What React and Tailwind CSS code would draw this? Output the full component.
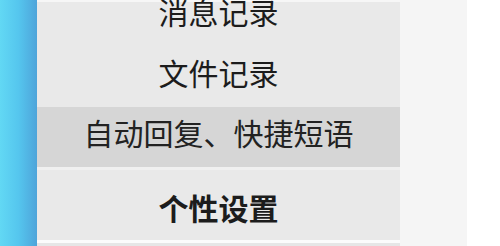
export default function App() {
  const font = { fontFamily: '"Noto Sans CJK SC", "Microsoft YaHei", sans-serif' }

  return (
    <div className="w-[500px] h-[246px] overflow-hidden flex bg-white" style={font}>
      <div className="w-[37px] h-full bg-gradient-to-r from-[#62d8f4] via-[#55c6ee] to-[#4ea4da]" />
      <div className="w-[363px] h-full flex flex-col bg-[#e9e9e9] border-t-2 border-[#f6f6f6] text-[30px] leading-none text-[#1c1c1c]">
        <div className="h-[61px] -mt-[17px] pb-[10px] shrink-0 flex items-center justify-center">消息记录</div>
        <div className="h-[61px] pb-[10px] shrink-0 flex items-center justify-center">文件记录</div>
        <div className="h-[60px] pb-[10px] shrink-0 flex items-center justify-center bg-[#d6d6d6] text-[#222]">自动回复、快捷短语</div>
        <div className="h-[3px] shrink-0 bg-[#f0f0f0]" />
        <div className="h-[70px] shrink-0 flex items-center justify-center font-bold pt-[4px]">个性设置</div>
        <div className="h-[3px] shrink-0 bg-[#fbfbfb]" />
        <div className="flex-1 bg-[#e6e6e6]" />
      </div>
      <div className="w-[67px] h-full bg-[#f5f5f5]" />
      <div className="flex-1 h-full bg-white" />
    </div>
  )
}
